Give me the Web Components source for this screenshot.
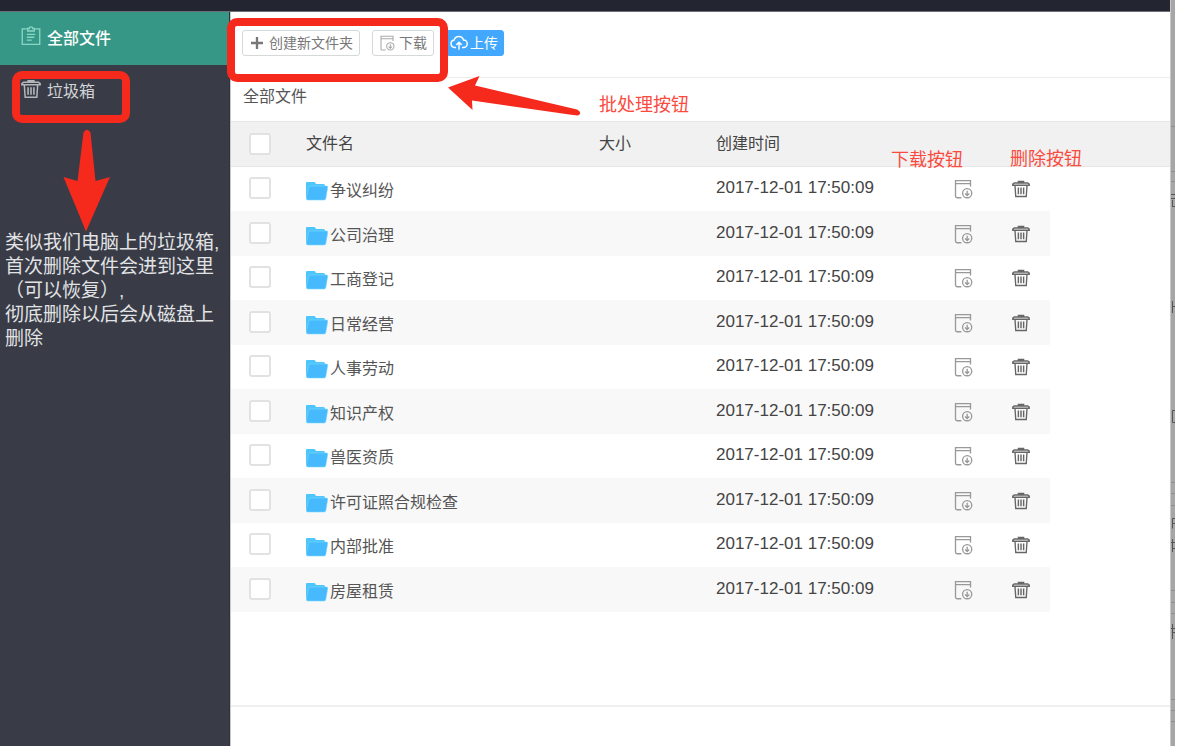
<!DOCTYPE html>
<html lang="zh-CN">
<head>
<meta charset="utf-8">
<title>全部文件</title>
<style>
html, body { margin: 0; height: 100%; }
body { font-family: "Liberation Sans", "Noto Sans CJK SC", sans-serif; background: #fff; }
</style>
</head>
<body>
<file-app></file-app>
<script>
const ICONS = {
  clip: '<path d="M7 3.500H1.500v18.500h21V3.500H17M8 6V3h2a2 2 0 0 1 4 0h2v3z"/><path d="M7 10h10M7 13.500h9M7 17h6"/>',
  trash: '<path d="M1 7V5.500L3 4h18l2 1.500V7zM8.500 3.500V2h7v1.500M4 7.500L5 22h14l1-14.500" stroke-width="1.800"/><path d="M8.500 10v9M12 10v9M15.500 10v9" stroke-width="1.900"/>',
  down: '<path d="M21 9V2H3v18.500a2 2 0 0 0 2 2h5M3 5.500h18"/><circle cx="17" cy="17" r="5.500"/><path d="M17 14v5.500M14.500 17.500l2.500 2.500 2.500-2.500"/>',
  plus: '<path d="M12 3v18M3 12h18" stroke-width="3.500"/>',
  cloud: '<path d="M8 18H6a5 5 0 0 1-.5-9.900A6.500 6.500 0 0 1 18 8a5 5 0 0 1 0 10h-2M12 21V11M8.500 14.500L12 11l3.500 3.500" stroke-width="1.900"/>',
};
function define(name, html, setup) {
  const t = document.createElement('template');
  t.innerHTML = html;
  customElements.define(name, class extends HTMLElement {
    constructor() {
      super();
      this.attachShadow({ mode: 'open' }).append(t.content.cloneNode(true));
    }
    connectedCallback() { if (setup) setup(this, this.shadowRoot); }
  });
}

define('ui-icon', `
<style>
:host { display: inline-flex; width: var(--size, 20px); height: var(--size, 20px); flex: none; }
svg { width: 100%; height: 100%; fill: none; stroke: currentColor; stroke-width: 1.600; }
</style><svg viewBox="0 0 24 24" aria-hidden="true"></svg>`,
(el, r) => { r.querySelector('svg').innerHTML = ICONS[el.getAttribute('name')]; });

define('folder-icon', `
<style>:host { display: block; width: 22px; height: 20px; } svg { display: block; }</style>
<svg width="22" height="20" viewBox="0 0 22 20" aria-hidden="true">
<path d="M0 17V2q0-1 1-1h7q1 0 1.500 1l.5 1h7.500q1.500 0 1.500 1.500V7" fill="#4fc6fb"/>
<path d="M2.500 6.500q.3-1.500 1.500-1.500h16.500q1.500 0 1.200 1.400L19.800 17.500q-.4 1.500-1.700 1.500H2Q0 19 .3 17.300z" fill="#47b9fd" stroke="#7ad8ff" stroke-width=".6"/>
</svg>`);

define('side-item', `
<style>
:host { display: block; color: #d3d4d7; }
:host([active]) { background: #369787; color: #fff; font-weight: 500; }
a { display: flex; box-sizing: border-box; align-items: center; height: 53px; padding: 0 0 3px 21px; gap: 6px; color: inherit; text-decoration: none; font-size: 16px; }
ui-icon { color: #b4b6bb; margin-bottom: 2px; }
:host([active]) ui-icon { color: #8ad6c4; }
</style>
<a href="#"><ui-icon></ui-icon><slot></slot></a>`,
(el, r) => {
  const i = document.createElement('ui-icon');
  i.setAttribute('name', el.getAttribute('icon'));
  r.querySelector('ui-icon').replaceWith(i);
});

define('side-nav', `
<style>
:host { display: block; box-sizing: border-box; width: 230px; flex: none; background: #393c47; border-right: 1px solid #2f323c; }
</style>
<nav><side-item icon="clip" active>全部文件</side-item><side-item icon="trash">垃圾箱</side-item></nav>
<slot></slot>`);

define('tool-button', `
<style>
:host { display: block; }
button { display: flex; align-items: center; gap: 4px; height: 26px; margin: 0; padding: 0 6px; border: 1px solid #d5dad9; border-radius: 3px; background: #fff; color: #777; font: inherit; font-size: 14px; line-height: 20px; --size: 16px; }
:host([primary]) button { background: #42a8fd; border-color: #42a8fd; color: #fff; --size: 18px; gap: 2px; padding: 0 5px 0 3px; }
ui-icon[name=down] { color: #aaa; }
</style>
<button type="button"><slot name="icon"></slot><slot></slot></button>`,
(el, r) => {
  const i = document.createElement('ui-icon');
  i.setAttribute('name', el.getAttribute('icon'));
  r.querySelector('slot[name=icon]').replaceWith(i);
});

define('tool-bar', `
<style>
:host { display: flex; box-sizing: border-box; align-items: center; height: 66px; padding: 0 11px 4px; border-bottom: 1px solid #ececec; gap: 12px; }
</style>
<tool-button icon="plus">创建新文件夹</tool-button><tool-button icon="down">下载</tool-button><tool-button icon="cloud" primary>上传</tool-button>`);

const FILES = ['争议纠纷', '公司治理', '工商登记', '日常经营', '人事劳动', '知识产权', '兽医资质', '许可证照合规检查', '内部批准', '房屋租赁'];
define('file-table', `
<style>
:host { display: block; font-size: 17px; color: #555; }
table { width: 100%; table-layout: fixed; border-collapse: separate; border-spacing: 0; }
.check { width: 75px; } .name { width: 293px; } .size { width: 117px; } .time { width: 218px; } .act { width: 58px; }
th, td { box-sizing: border-box; padding: 0; text-align: left; font-weight: 400; line-height: 24px; }
th { height: 46px; background: #f1f1f1; border: solid #e6e6e6; border-width: 1px 0; font-size: 16px; color: #444; }
td { height: 44px; }
tr:nth-child(even) td { height: 45px; background: #f8f8f8; }
tbody tr td:last-child { background: none !important; }
td:first-child, td.date { padding-bottom: 2px; }
td.file { padding-top: 4px; font-size: 16px; }
td.date { color: #444; }
th:first-child, td:first-child { padding-left: 18px; }
input { display: block; appearance: none; box-sizing: border-box; width: 22px; height: 22px; margin: 0; border: 2px solid #e2e2e2; border-radius: 3px; background: #fff; }
.entry { display: flex; align-items: center; gap: 2px; }
button { display: flex; margin: 0 auto; padding: 0; border: 0; background: none; color: #999; }
button.del { color: #666; --size: 18px; }
</style>
<table>
<colgroup><col class="check"><col class="name"><col class="size"><col class="time"><col class="act"><col class="act"><col></colgroup>
<thead><tr><th><input type="checkbox" aria-label="全选"></th><th>文件名</th><th>大小</th><th>创建时间</th><th></th><th></th><th></th></tr></thead>
<tbody></tbody></table>`,
(el, r) => {
  r.querySelector('tbody').innerHTML = FILES.map(f => `<tr><td><input type="checkbox" aria-label="${f}"></td>
<td class="file"><div class="entry"><folder-icon></folder-icon><span>${f}</span></div></td><td></td><td class="date">2017-12-01 17:50:09</td>
<td><button type="button" aria-label="下载"><ui-icon name="down"></ui-icon></button></td>
<td><button type="button" class="del" aria-label="删除"><ui-icon name="trash"></ui-icon></button></td><td></td></tr>`).join('');
});

define('mark-box', `
<style>:host { position: absolute; box-sizing: border-box; border: 8px solid #f5291c; border-radius: 10px; pointer-events: none; }</style>`);

define('mark-label', `
<style>:host { position: absolute; color: #fa4b40; font-size: 18px; line-height: 24px; white-space: nowrap; }</style><slot></slot>`);

define('file-app', `
<style>
:host { display: flex; flex-direction: column; min-height: 100%; position: relative; }
.top { height: 12px; margin-right: 8px; background: #232630; border-bottom: 1px solid #6d7078; box-sizing: border-box; }
.body { display: flex; flex: 1; }
main { flex: 1; min-width: 0; border-left: 1px solid #c9cad0; }
.panel { box-sizing: border-box; min-height: 695px; border-bottom: 2px solid #efefef; }
h1 { margin: 0; padding: 0 12px; font-size: 16px; font-weight: 400; line-height: 38px; height: 43px; color: #555; }
.edge { width: 5px; margin-right: 3px; margin-top: -12px; background: #a6a6a6; border-left: 1px solid #c8c8c8; box-sizing: border-box; }
.edge svg { display: block; stroke: #8e8e8e; fill: none; }
.note { margin: 0; padding: 113px 0 0 5px; color: #e2e3e5; font-size: 19px; line-height: 24px; white-space: nowrap; }
.note span { display: block; }
.trash { left: 12px; top: 71px; width: 118px; height: 52px; }
.tools { left: 227px; top: 18px; width: 221px; height: 64px; }
.batch { left: 599px; top: 93px; } .get { left: 891px; top: 148px; } .del { left: 1010px; top: 147px; }
.arrow { position: absolute; fill: #f5291c; }
.a1 { left: 60px; top: 128px; } .a2 { left: 446px; top: 72px; }
</style>
<div class="top"></div>
<div class="body">
<side-nav><p class="note"><span>类似我们电脑上的垃圾箱,</span><span>首次删除文件会进到这里</span><span>（可以恢复）,</span><span>彻底删除以后会从磁盘上</span><span>删除</span></p></side-nav>
<main><div class="panel"><tool-bar></tool-bar><h1>全部文件</h1><file-table></file-table></div></main>
<div class="edge"><svg width="4" height="740" viewBox="0 0 4 740" aria-hidden="true"><path d="M0 126.500h4M0 171.500h4M0 181.500h4M0 482.500h4M0 493.500h4M0 505.500h4M0 590.500h4M0 602.500h4M0 613.500h4M0 699.500h4M0 710.500h4M0 721.500h4"/><path stroke="#555" d="M0 194.500h4M0 198.500h4M1.500 200v6M1 206.500h3M1.500 301v12M1 306.500h3M4 410.500H1.500v12H4M4 518.500H1.500v10M1 523.500h3M0 542.500h4M1.500 539v13M1 548.500h3M0 628.500h4M1.500 624v15M1 632.500h3"/></svg></div>
</div>
<mark-box class="trash"></mark-box>
<mark-box class="tools"></mark-box>
<svg class="arrow a1" width="54" height="106" viewBox="0 0 54 106" aria-hidden="true"><path d="M23.500 4.500Q27-1 30.500 4.500L35.500 53 50 49 26 103.500 3.500 49 17.500 53z"/></svg>
<svg class="arrow a2" width="138" height="48" viewBox="0 0 138 48" aria-hidden="true"><path d="M2 15.500L33.500 4 29 13.500 131 37.500Q137 41 132 43.500L127 43 26 28.500 26.500 38z"/></svg>
<mark-label class="batch">批处理按钮</mark-label>
<mark-label class="get">下载按钮</mark-label>
<mark-label class="del">删除按钮</mark-label>`);
</script>
</body>
</html>
